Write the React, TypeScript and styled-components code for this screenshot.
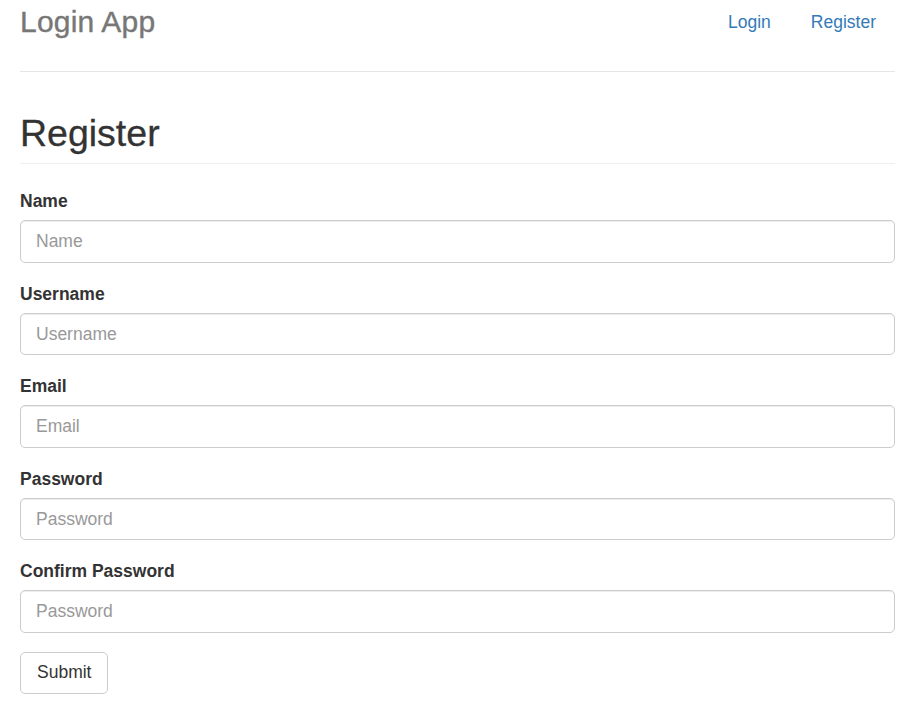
import styled, { createGlobalStyle } from "styled-components";

const GlobalStyle = createGlobalStyle`
  html, body {
    margin: 0;
    padding: 0;
    background: #fff;
    overflow: hidden;
  }
  body {
    font-family: "Liberation Sans", Arial, Helvetica, sans-serif;
    font-size: 17.5px;
    line-height: 25px;
    color: #333;
  }
  * {
    box-sizing: border-box;
  }
`;

// Общий контейнер
const Container = styled.div`
  padding: 0 18px 0 20px;
`;

// Шапка с названием и ссылками
const Header = styled.header`
  display: flex;
  justify-content: space-between;
  align-items: flex-start;
  height: 72px;
  border-bottom: 1px solid #e5e5e5;
`;

const Brand = styled.h3`
  margin: 5px 0 0;
  font-size: 30px;
  line-height: 33px;
  font-weight: 500;
  color: #777;
  letter-spacing: 0.2px;
  -webkit-text-stroke: 0.4px #777;
`;

const Nav = styled.nav`
  display: flex;
  margin-top: 9.7px;
`;

const NavLink = styled.a`
  display: block;
  padding: 0 18.75px;
  margin-left: 2.5px;
  color: #337ab7;
  text-decoration: none;
  line-height: 25px;

  &:last-child {
    padding-right: 19px;
  }
`;

// Заголовок страницы
const PageHeader = styled.h2`
  margin: 41px 0 25px;
  padding-bottom: 8.75px;
  border-bottom: 1px solid #eee;
  font-size: 37.5px;
  line-height: 41.25px;
  font-weight: 500;
  color: #333;
  -webkit-text-stroke: 0.3px #333;
`;

const FormGroup = styled.div`
  margin-bottom: 18.75px;
`;

const Label = styled.label`
  display: block;
  margin-bottom: 6.25px;
  font-weight: 700;
  line-height: 25px;
`;

const Input = styled.input`
  display: block;
  width: 100%;
  height: 42.5px;
  padding: 7.5px 15px;
  font-family: inherit;
  font-size: 17.5px;
  line-height: 25px;
  color: #555;
  background: #fff;
  border: 1px solid #ccc;
  border-radius: 5px;
  box-shadow: inset 0 1px 1px rgba(0, 0, 0, 0.075);
  outline: none;

  &::placeholder {
    color: #999;
  }
`;

const Button = styled.button`
  display: inline-block;
  height: 42.5px;
  padding: 7.5px 16px;
  font-family: inherit;
  font-size: 17.5px;
  line-height: 25px;
  color: #333;
  background: #fff;
  border: 1px solid #ccc;
  border-radius: 5px;
  cursor: pointer;
`;

const fields = [
  { label: "Name", placeholder: "Name", type: "text" },
  { label: "Username", placeholder: "Username", type: "text" },
  { label: "Email", placeholder: "Email", type: "email" },
  { label: "Password", placeholder: "Password", type: "password" },
  { label: "Confirm Password", placeholder: "Password", type: "password" },
];

function App() {
  return (
    <>
      <GlobalStyle />
      <Container>
        <Header>
          <Brand>Login App</Brand>
          <Nav>
            <NavLink href="#">Login</NavLink>
            <NavLink href="#">Register</NavLink>
          </Nav>
        </Header>

        <PageHeader>Register</PageHeader>

        <form onSubmit={(e) => e.preventDefault()}>
          {fields.map((f) => (
            <FormGroup key={f.label}>
              <Label>{f.label}</Label>
              <Input type={f.type} placeholder={f.placeholder} />
            </FormGroup>
          ))}
          <Button type="submit">Submit</Button>
        </form>
      </Container>
    </>
  );
}

export default App;
